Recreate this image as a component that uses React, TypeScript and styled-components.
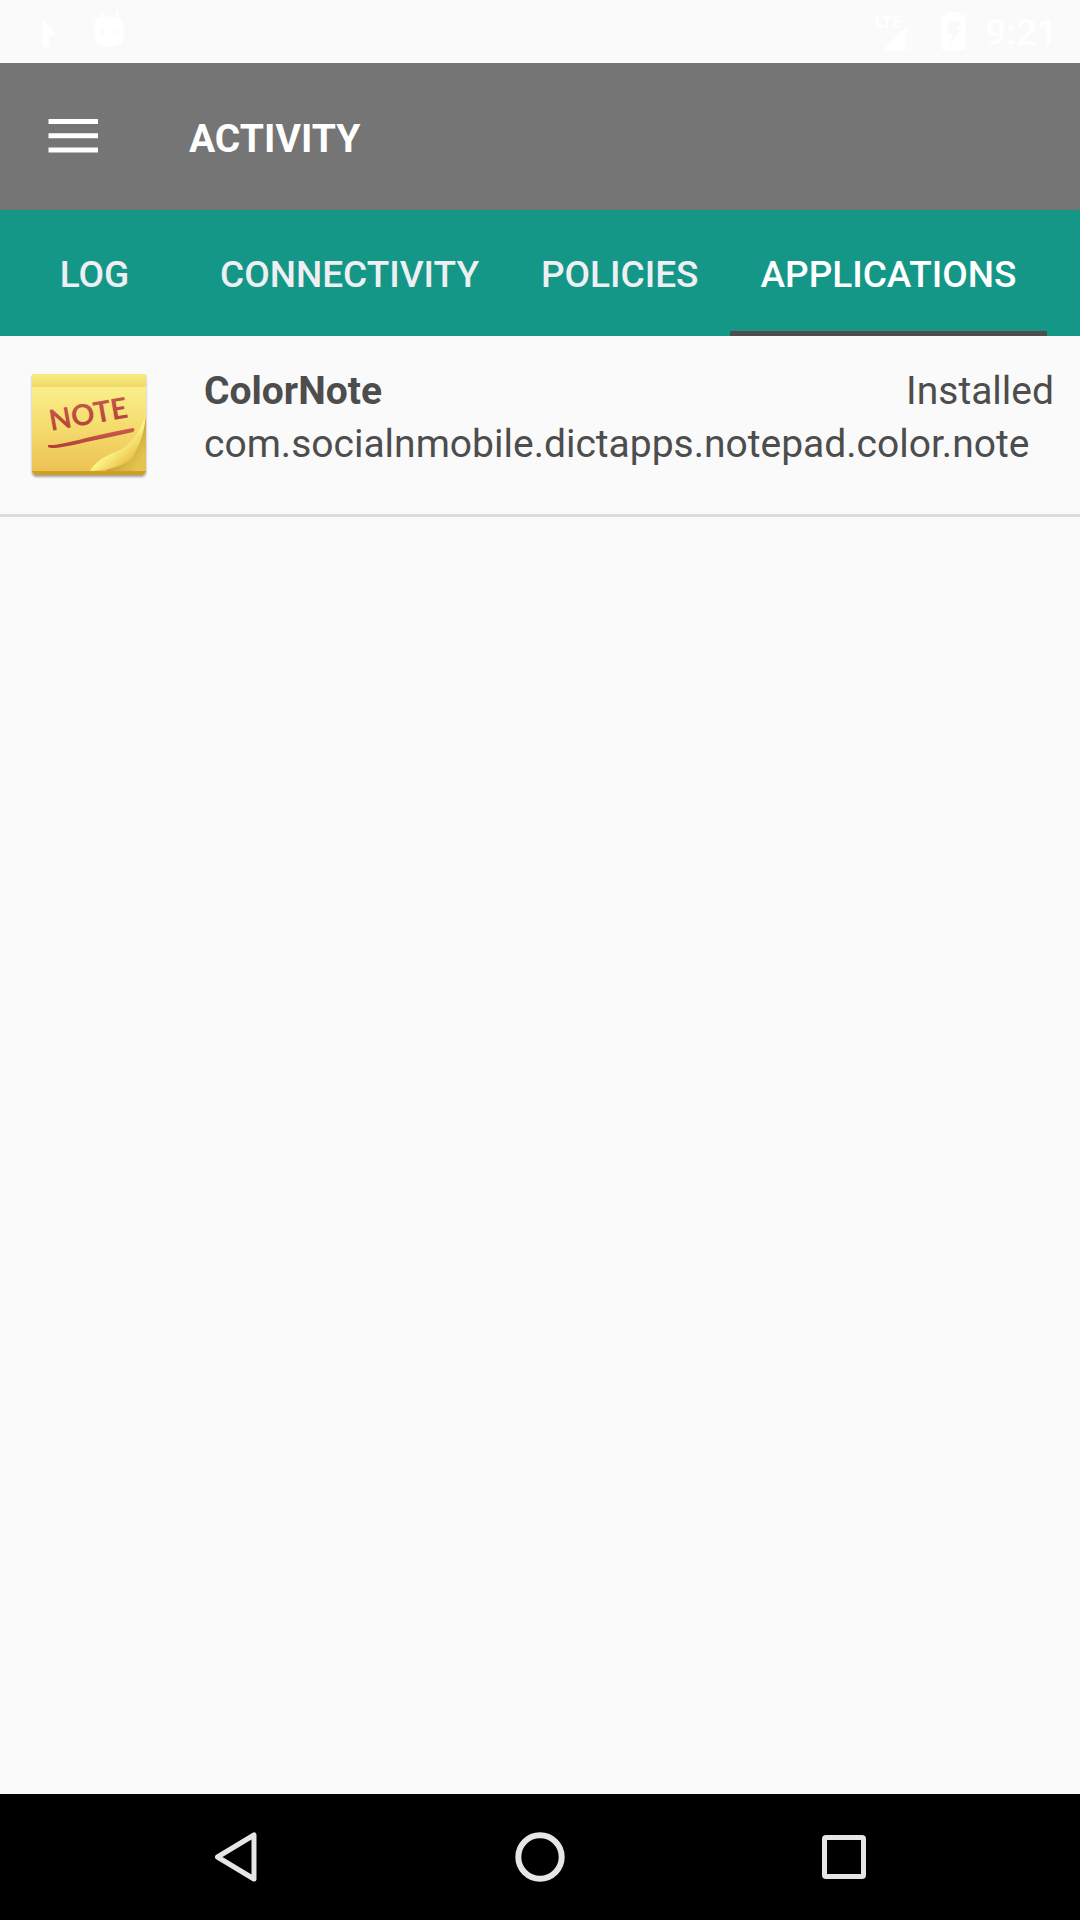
import React, { useState } from "react";
import styled, { createGlobalStyle } from "styled-components";

const GlobalStyle = createGlobalStyle`
  * { box-sizing: border-box; }
  body {
    margin: 0;
    background: #fafafa;
    font-family: Roboto, "Liberation Sans", sans-serif;
    color: #4d4d4d;
  }
  button {
    margin: 0;
    padding: 0;
    border: 0;
    background: none;
    color: inherit;
    font: inherit;
    cursor: pointer;
  }
  svg { display: block; flex: none; }
`;

const Screen = styled.div`
  display: flex;
  flex-direction: column;
  min-height: 100vh;
`;

const StatusBar = styled.header`
  display: flex;
  align-items: center;
  justify-content: space-between;
  height: 63px;
  padding: 0 22px 0 32px;
  color: #ffffff;
`;

const StatusGroup = styled.div<{ $gap: number }>`
  display: flex;
  align-items: center;
  gap: ${(p) => p.$gap}px;
`;

const Clock = styled.time`
  padding-top: 3px;
  font-size: 37px;
  line-height: 44px;
  font-weight: 500;
`;

const AppBar = styled.div`
  display: flex;
  align-items: center;
  height: 147px;
  padding-left: 42px;
  background: #757575;
  color: #ffffff;
`;

const MenuButton = styled.button`
  display: flex;
  align-items: center;
  width: 147px;
  height: 63px;
`;

const Title = styled.h1`
  margin: 0;
  padding-top: 4px;
  font-size: 39px;
  line-height: 48px;
  font-weight: 700;
`;

const Tabs = styled.div`
  display: flex;
  height: 126px;
  background: #159788;
`;

const Tab = styled.button<{ $active: boolean }>`
  && {
    min-width: 189px;
    padding: 8px 31px 0;
    border-bottom: 5px solid ${(p) => (p.$active ? "#4d4d4d" : "transparent")};
    color: ${(p) => (p.$active ? "#ffffff" : "#eeeff2")};
    font-size: 37px;
    line-height: 44px;
    font-weight: 500;
    white-space: nowrap;
  }
`;

const AppList = styled.ul`
  flex: 1;
  margin: 0;
  padding: 0;
  list-style: none;
`;

const AppRow = styled.li`
  display: flex;
  align-items: flex-start;
  gap: 52px;
  padding: 29px 26px 34px;
  border-bottom: 3px solid #dcdcdc;
`;

const AppText = styled.div`
  flex: 1;
  min-width: 0;
  font-size: 39px;
  line-height: 53px;
`;

const NameLine = styled.div`
  display: flex;
  justify-content: space-between;
`;

const AppName = styled.strong`
  font-weight: 700;
`;

const NavBar = styled.nav`
  display: flex;
  justify-content: center;
  height: 126px;
  background: #000000;
`;

const NavButton = styled.button`
  display: flex;
  align-items: center;
  justify-content: center;
  width: 304px;
`;

const PlayIcon = () => (
  <svg width="42" height="63" viewBox="0 0 42 63" fill="#fff" aria-hidden="true">
    <path d="M11 18L24 35.500H17V47H11Z" />
  </svg>
);

const DroidIcon = () => (
  <svg width="34" height="63" viewBox="0 0 34 63" aria-hidden="true">
    <path d="M9 11L11 18M26 11L24 18" stroke="#fff" strokeWidth="2" />
    <path
      d="M4 18Q17 15 29 18Q32 25 32 32Q32 39 30 43Q24 47 17 47Q9 47 4 43Q2 38 2 31Q2 24 4 18Z"
      fill="#fff"
    />
    <circle cx="10" cy="32" r="2" fill="#fafafa" />
    <circle cx="25" cy="32" r="2" fill="#fafafa" />
  </svg>
);

const SignalIcon = () => (
  <svg width="48" height="63" viewBox="0 0 48 63" aria-hidden="true">
    <path d="M8 50L45 13V50Z" fill="#fff" opacity="0.3" />
    <path d="M8 50L31 27V50Z" fill="#fff" />
    <text x="0" y="28" fontSize="16" fontWeight="700" fill="#fff">
      LTE
    </text>
  </svg>
);

const BatteryIcon = () => (
  <svg width="26" height="63" viewBox="0 0 26 63" aria-hidden="true">
    <path
      fillRule="evenodd"
      fill="#fff"
      d="M7 12H19V15H25V50H1V15H7ZM8 22L6 34H12L8 45L21 29H15L20 22Z"
    />
  </svg>
);

const MenuIcon = () => (
  <svg width="63" height="63" viewBox="0 0 63 63" fill="#fff" aria-hidden="true">
    <path d="M6.500 14H56V19H6.500ZM6.500 28.300H56V33.300H6.500ZM6.500 42.500H56V47.500H6.500Z" />
  </svg>
);

const NoteIcon = () => (
  <svg width="126" height="115" viewBox="0 -2 126 115" role="img" aria-label="ColorNote icon">
    <defs>
      <linearGradient id="band" x1="0" y1="0" x2="0" y2="1">
        <stop offset="0" stopColor="#f9ec84" />
        <stop offset="1" stopColor="#f2d768" />
      </linearGradient>
      <linearGradient id="sheet" x1="0" y1="0" x2="0" y2="1">
        <stop offset="0" stopColor="#fbef8a" />
        <stop offset="0.500" stopColor="#f5da6c" />
        <stop offset="1" stopColor="#edc253" />
      </linearGradient>
      <linearGradient id="curl" x1="0.150" y1="0.250" x2="0.650" y2="0.850">
        <stop offset="0.150" stopColor="#f0cb58" />
        <stop offset="0.600" stopColor="#fdf286" />
        <stop offset="1" stopColor="#ecc550" />
      </linearGradient>
      <linearGradient id="under" x1="0" y1="0" x2="1" y2="1">
        <stop offset="0.400" stopColor="#c39a26" />
        <stop offset="0.850" stopColor="#e2c44e" />
      </linearGradient>
      <linearGradient id="ink" x1="0" y1="0" x2="0" y2="1">
        <stop offset="0" stopColor="#c95d50" />
        <stop offset="1" stopColor="#b23f36" />
      </linearGradient>
      <filter id="shadow" x="-10%" y="-10%" width="120%" height="125%">
        <feDropShadow dx="0" dy="2" stdDeviation="1" floodColor="#000" floodOpacity="0.350" />
      </filter>
    </defs>
    <path d="M6 7H120V105L117 108H9L6 105Z" fill="#cfa022" filter="url(#shadow)" />
    <path d="M6 7H120V104H6Z" fill="url(#sheet)" />
    <path d="M6 7H120V20H6Z" fill="url(#band)" />
    <path d="M120 44V104H80Z" fill="url(#under)" />
    <path d="M6 20H120V48Q117 75 105 92Q90 104 64 104H6Z" fill="url(#sheet)" />
    <path d="M120 46Q118 74 105 91Q90 103 64 104Q70 92 92 84Q112 74 120 46Z" fill="url(#curl)" />
    <text
      x="25"
      y="64"
      fill="url(#ink)"
      fontFamily="Lato, sans-serif"
      fontSize="29"
      fontWeight="700"
      transform="rotate(-10 25 64)"
    >
      NOTE
    </text>
    <path
      d="M22 78Q30 79 60 71Q90 64 107 61Q110 62 107 65Q90 69 60 75Q35 81 26 81Q21 81 22 78Z"
      fill="url(#ink)"
    />
  </svg>
);

const BackIcon = () => (
  <svg width="50" height="50" viewBox="0 0 50 50" aria-hidden="true">
    <path
      d="M6.500 25L43 3V47Z"
      fill="none"
      stroke="#e6e6e6"
      strokeWidth="5"
      strokeLinejoin="round"
    />
  </svg>
);

const HomeIcon = () => (
  <svg width="50" height="50" viewBox="0 0 50 50" aria-hidden="true">
    <circle cx="25" cy="25" r="21.700" fill="none" stroke="#e6e6e6" strokeWidth="6" />
  </svg>
);

const RecentsIcon = () => (
  <svg width="50" height="50" viewBox="0 0 50 50" aria-hidden="true">
    <rect x="5.500" y="5.500" width="39" height="39" rx="1.500" fill="none" stroke="#e6e6e6" strokeWidth="5" />
  </svg>
);

const tabNames = ["LOG", "CONNECTIVITY", "POLICIES", "APPLICATIONS"];

const apps = [
  {
    name: "ColorNote",
    status: "Installed",
    id: "com.socialnmobile.dictapps.notepad.color.note",
  },
];

export default function App() {
  const [active, setActive] = useState("APPLICATIONS");
  return (
    <Screen>
      <GlobalStyle />
      <StatusBar>
        <StatusGroup $gap={18}>
          <PlayIcon />
          <DroidIcon />
        </StatusGroup>
        <StatusGroup $gap={18}>
          <SignalIcon />
          <BatteryIcon />
          <Clock>9:21</Clock>
        </StatusGroup>
      </StatusBar>
      <AppBar>
        <MenuButton aria-label="Open menu">
          <MenuIcon />
        </MenuButton>
        <Title>ACTIVITY</Title>
      </AppBar>
      <Tabs role="tablist">
        {tabNames.map((name) => (
          <Tab
            key={name}
            role="tab"
            aria-selected={name === active}
            $active={name === active}
            onClick={() => setActive(name)}
          >
            {name}
          </Tab>
        ))}
      </Tabs>
      <AppList>
        {apps.map((app) => (
          <AppRow key={app.id}>
            <NoteIcon />
            <AppText>
              <NameLine>
                <AppName>{app.name}</AppName>
                <span>{app.status}</span>
              </NameLine>
              <div>{app.id}</div>
            </AppText>
          </AppRow>
        ))}
      </AppList>
      <NavBar aria-label="System navigation">
        <NavButton aria-label="Back">
          <BackIcon />
        </NavButton>
        <NavButton aria-label="Home">
          <HomeIcon />
        </NavButton>
        <NavButton aria-label="Recent apps">
          <RecentsIcon />
        </NavButton>
      </NavBar>
    </Screen>
  );
}
